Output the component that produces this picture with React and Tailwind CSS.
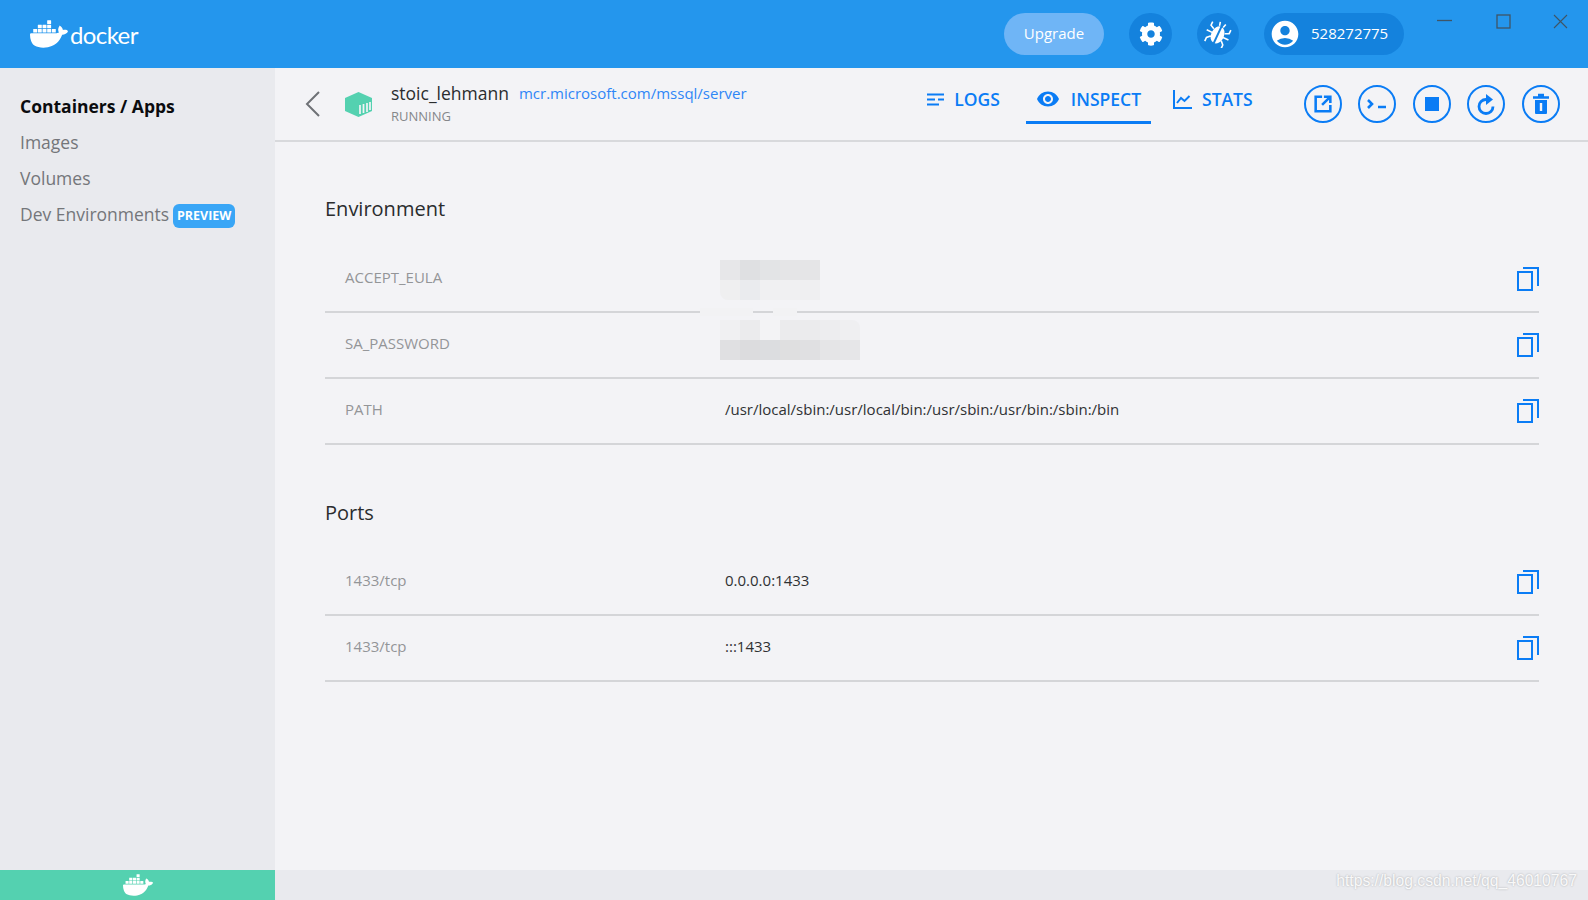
import React from "react";
import { SiDocker } from "react-icons/si";
import { FaCog } from "react-icons/fa";
import { MdAccountCircle, MdVisibility } from "react-icons/md";

const font = { fontFamily: '"Open Sans", sans-serif' };

const CopyIcon = () => (
  <svg width="22" height="25" viewBox="0 0 22 25" fill="none" stroke="#0a7cf5" strokeWidth="2">
    <rect x="1" y="6" width="14" height="18" />
    <path d="M6 2h15v18" />
  </svg>
);

const BugIcon = () => (
  <svg width="28" height="28" viewBox="-14 -14 28 28">
    <g transform="rotate(25)" fill="none" stroke="#fff" strokeWidth="1.6">
      <ellipse cx="0" cy="1" rx="6.5" ry="9" fill="#fff" stroke="none" />
      <path d="M-2-8l-1-4M2-8l1-4M-6-3l-4-2v-4M6-3l4-2v-4M-6 1h-6M6 1h6M-6 5l4 0M-6 5l-3 3v4M6 5l3 3v4" />
      <path d="M0-9v21" stroke="#1482dd" strokeWidth="2" />
    </g>
  </svg>
);

const Row = ({ name, value }) => (
  <div className="flex h-[66px] items-center border-b-2 border-[#d4d5d8] pb-[2px] pl-5">
    <div className="w-[380px] pb-[2px] text-[15px] text-[#939598]">{name}</div>
    <div className="flex-1 pb-[2px] text-[15px] text-[#2f3133]">{value}</div>
    <CopyIcon />
  </div>
);

const Section = ({ title, rows, className }) => (
  <section className={className}>
    <h2 className="text-[20px] leading-7 text-[#2a2c2e]">{title}</h2>
    {rows.map((row) => (
      <Row key={row.name + row.value} name={row.name} value={row.value} />
    ))}
  </section>
);

const ActionButton = ({ children }) => (
  <button className="flex h-[38px] w-[38px] items-center justify-center rounded-full border-[2.5px] border-[#0a7cf5] text-[#0a7cf5]">
    {children}
  </button>
);

const Tab = ({ icon, label, active, className }) => (
  <div className={`flex h-[50px] items-center border-b-[3px] px-[10px] pt-[3px] text-[17.5px] font-semibold text-[#0a7cf5] ${active ? "border-[#0a7cf5]" : "border-transparent"} ${className}`}>
    {icon}
    <span>{label}</span>
  </div>
);

export default function App() {
  return (
    <div className="flex h-[900px] flex-col overflow-hidden bg-[#f3f3f6]" style={font}>
      {/* Top bar */}
      <header className="flex h-[68px] shrink-0 items-center bg-[#2496ed] text-white">
        <div className="ml-[30px] flex items-center gap-[2px]">
          <SiDocker size={38} />
          <span className="mt-[2px] text-[24px] leading-none tracking-[-0.6px]" style={{ fontFamily: "Lato, sans-serif" }}>docker</span>
        </div>
        <div className="ml-auto flex items-center pb-[1px]">
          <button className="flex h-[42px] w-[100px] items-center justify-center rounded-full bg-[#6fb5f6] text-[15px]">Upgrade</button>
          <button className="ml-[25px] flex h-[42px] w-[43px] items-center justify-center rounded-full bg-[#1482dd]">
            <FaCog size={24} />
          </button>
          <button className="ml-[25px] flex h-[42px] w-[42px] items-center justify-center rounded-full bg-[#1482dd]">
            <BugIcon />
          </button>
          <div className="ml-[25px] flex h-[42px] w-[140px] items-center rounded-full bg-[#1482dd] pl-[5px] text-[15px]">
            <MdAccountCircle size={32} />
            <span className="ml-[10px]">528272775</span>
          </div>
        </div>
        <div className="ml-[33px] mr-[20px] flex h-full items-start pt-[14px]">
          <svg width="15" height="15" viewBox="0 0 15 15" stroke="#3f5566" strokeWidth="1.3"><path d="M0 6.5h15" /></svg>
          <svg className="ml-[44px]" width="15" height="15" viewBox="0 0 15 15" fill="none" stroke="#3f5566" strokeWidth="1.3"><rect x="1" y="1" width="13" height="13" /></svg>
          <svg className="ml-[42px]" width="15" height="15" viewBox="0 0 15 15" stroke="#3f5566" strokeWidth="1.1"><path d="M1 1l13 13M14 1L1 14" /></svg>
        </div>
      </header>

      <div className="flex min-h-0 flex-1">
        {/* Sidebar */}
        <aside className="w-[275px] shrink-0 bg-[#e9eaee] pl-5 pt-[20px] text-[17.5px] text-[#74767a]">
          <div className="h-9 font-bold leading-9 text-[#0b0c0e]">Containers / Apps</div>
          <div className="h-9 leading-9">Images</div>
          <div className="h-9 leading-9">Volumes</div>
          <div className="flex h-9 items-center">
            <span>Dev Environments</span>
            <span className="ml-[4px] mt-[4px] flex h-[24px] w-[62px] items-center justify-center rounded-[6px] bg-[#39a6f6] text-[12.5px] font-bold text-white">PREVIEW</span>
          </div>
        </aside>

        {/* Main */}
        <main className="relative min-w-0 flex-1">
          <div className="flex h-[74px] items-center border-b-2 border-[#d8d9dc]">
            <svg className="ml-[30px]" width="15" height="26" viewBox="0 0 15 26" fill="none" stroke="#6e7176" strokeWidth="2"><path d="M14 1L2 13l12 12" /></svg>
            <svg className="ml-[25px]" width="27" height="25" viewBox="0 0 27 25">
              <path d="M13.5 0L27 6v13l-13.5 6L0 19V6z" fill="#54d1b0" />
              <path d="M15 13v9M18.5 12v9M22 11v9M25 10v8" stroke="#f3f3f6" strokeWidth="1.7" />
            </svg>
            <div className="ml-[19px]">
              <div className="-mt-[1px] flex h-[22px] items-center">
                <span className="text-[17.5px] text-[#2a2c2e]">stoic_lehmann</span>
                <span className="ml-[10px] text-[15px] text-[#2f86f6]">mcr.microsoft.com/mssql/server</span>
              </div>
              <div className="mt-[3px] text-[13px] leading-[18px] text-[#85878a]">RUNNING</div>
            </div>
            <div className="ml-auto mr-[41px] flex items-start self-start pt-[6px]">
              <Tab
                label="LOGS"
                className="mr-[16px] gap-[9px]"
                icon={
                  <svg width="18" height="13" viewBox="0 0 18 13" stroke="#0a7cf5" strokeWidth="2"><path d="M0 1.5h17M0 6.5h8M11 6.5h6M0 11.5h12" /></svg>
                }
              />
              <Tab label="INSPECT" active className="mr-[12px] gap-[11px]" icon={<MdVisibility size={24} />} />
              <Tab
                label="STATS"
                className="gap-[10px]"
                icon={
                  <svg width="19" height="19" viewBox="0 0 19 19" fill="none" stroke="#0a7cf5" strokeWidth="2"><path d="M1 0v18h18M4 13l4-5 3.5 3 5-5" /></svg>
                }
              />
            </div>
            <div className="mr-[28px] flex gap-[16.6px]">
              <ActionButton>
                <svg width="22" height="22" viewBox="0 0 24 24" fill="none" stroke="currentColor" strokeWidth="2.8"><path d="M11 4H4v16h16v-7M11 13l8-8M13 4h7v7" /></svg>
              </ActionButton>
              <ActionButton>
                <svg width="20" height="10" viewBox="0 0 20 10" fill="none" stroke="currentColor" strokeWidth="2.6"><path d="M1 1l4 4-4 4M11 8h8" /></svg>
              </ActionButton>
              <ActionButton><span className="h-[14px] w-[14px] bg-[#0a7cf5]" /></ActionButton>
              <ActionButton>
                <svg width="24" height="24" viewBox="0 0 24 24" fill="none"><path d="M12 7.5a7 7 0 1 0 7 7" stroke="currentColor" strokeWidth="2.8" /><path d="M12 2l7 5.5-7 5.5z" fill="currentColor" /></svg>
              </ActionButton>
              <ActionButton>
                <svg width="20" height="22" viewBox="0 0 20 22" fill="none"><path d="M2 4.5h16M7 2h6" stroke="currentColor" strokeWidth="2.4" /><path d="M4 7h12v13a1 1 0 0 1-1 1H5a1 1 0 0 1-1-1z" fill="currentColor" /><path d="M10 10v8" stroke="#f3f3f6" strokeWidth="2.4" /></svg>
              </ActionButton>
            </div>
          </div>

          <div className="px-[50px] pr-[49px] pt-[53px]">
            <Section
              title="Environment"
              rows={[
                { name: "ACCEPT_EULA", value: "" },
                { name: "SA_PASSWORD", value: "" },
                { name: "PATH", value: "/usr/local/sbin:/usr/local/bin:/usr/sbin:/usr/bin:/sbin:/bin" },
              ]}
              className="[&>h2]:mb-6"
            />
            <Section
              title="Ports"
              className="mt-[54px] [&>h2]:mb-[23px]"
              rows={[
                { name: "1433/tcp", value: "0.0.0.0:1433" },
                { name: "1433/tcp", value: ":::1433" },
              ]}
            />
          </div>

          {/* Blurred-out values */}
          <div className="absolute left-[445px] top-[192px] grid h-[40px] w-[100px] grid-cols-5 grid-rows-2">
            <div className="bg-[#e7e7e9]" /><div className="bg-[#dfe0e2]" /><div className="bg-[#e3e4e6]" /><div className="bg-[#e5e5e7]" /><div className="bg-[#e5e5e7]" />
            <div className="rounded-bl-lg bg-[#efeff0]" /><div className="bg-[#eaebee]" /><div className="bg-[#f0f0f2]" /><div className="bg-[#f0f0f2]" /><div className="bg-[#efeff1]" />
          </div>
          <div className="absolute left-[425px] top-[240px] h-[8px] w-[53px] bg-[#f2f2f4]" />
          <div className="absolute left-[498px] top-[240px] h-[8px] w-[24px] bg-[#f2f2f4]" />
          <div className="absolute left-[445px] top-[252px] grid h-[40px] w-[140px] grid-cols-7 grid-rows-2">
            <div className="bg-[#f0f0f2]" /><div className="bg-[#ebebed]" /><div className="bg-[#f3f3f5]" /><div className="bg-[#ebebed]" /><div className="bg-[#ebebed]" /><div className="bg-[#ededef]" /><div className="rounded-tr-lg bg-[#efeff1]" />
            <div className="bg-[#e0e0e2]" /><div className="bg-[#dcdcde]" /><div className="bg-[#dcdde0]" /><div className="bg-[#dfdfe0]" /><div className="bg-[#e0e0e2]" /><div className="bg-[#e5e5e7]" /><div className="bg-[#e6e6e8]" />
          </div>
        </main>
      </div>

      {/* Status bar */}
      <footer className="relative flex h-[30px] shrink-0 bg-[#e9eaee]">
        <div className="flex w-[275px] items-center justify-center bg-[#54d1b0] text-white">
          <SiDocker size={30} />
        </div>
        <span className="absolute right-[11px] top-0 text-[15.7px] leading-[22px] text-white/90" style={{ fontFamily: '"Liberation Sans", sans-serif', textShadow: "0 0 2px rgba(0,0,0,0.3)" }}>https://blog.csdn.net/qq_46010767</span>
      </footer>
    </div>
  );
}
